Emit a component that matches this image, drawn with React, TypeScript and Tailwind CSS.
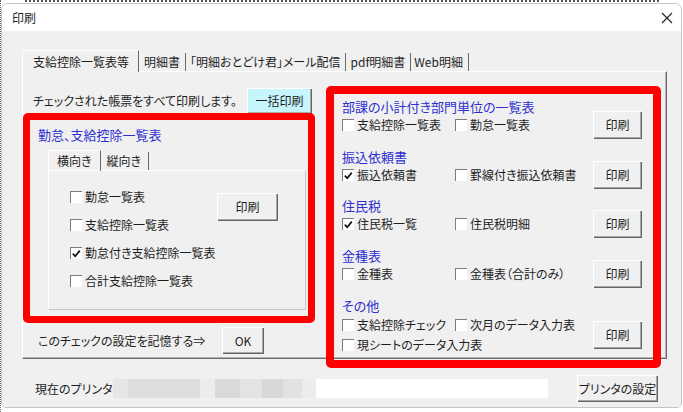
import React from "react";

function Check({ checked }: { checked?: boolean }) {
  return (
    <span className="relative inline-block w-[12px] h-[12px] shrink-0 bg-white border-t border-l border-[#7c7c7c]">
      {checked && (
        <svg className="absolute left-[0px] top-[0px]" width="11" height="11" viewBox="0 0 11 11">
          <path d="M1.8 5.6 L4.2 8.2 L8.8 2.6" stroke="#111" strokeWidth="1.7" fill="none" />
        </svg>
      )}
    </span>
  );
}

function Btn({ children, className, cyan }: { children: React.ReactNode; className: string; cyan?: boolean }) {
  return (
    <div
      className={
        "flex items-center justify-center shrink-0 text-[12px] text-[#1e1e1e] shadow-[inset_1px_1px_0_#ffffff,inset_-1px_-1px_0_#646464,inset_-2px_-2px_0_#a8a8a8] " +
        (cyan ? "bg-[#c6f5fc] " : "bg-[#f0f0f0] ") +
        className
      }
    >
      {children}
    </div>
  );
}

function Item({ checked, label, w }: { checked?: boolean; label: string; w?: string }) {
  return (
    <div className={"flex items-center gap-[3px] " + (w ?? "")}>
      <Check checked={checked} />
      <span className="text-[12px] leading-[16px] whitespace-nowrap">{label}</span>
    </div>
  );
}

export default function App() {
  return (
    <div className="w-[683px] h-[412px] bg-white overflow-hidden border-l border-dotted border-[#666] font-['Noto_Sans_CJK_JP',sans-serif] [font-feature-settings:'palt'] text-[#1e1e1e]">
      <div className="h-[2px] mx-[24px] border-t-2 border-dotted border-[#555]" />
      <div className="mt-[1px] w-[681px] h-[405px] rounded-t-[7px] rounded-b-[5px] border border-[#c4c4c4] flex flex-col overflow-hidden">
        {/* title bar */}
        <div className="h-[27px] bg-white flex items-center justify-between pl-[10px] pr-[8px] shrink-0">
          <span className="text-[12px] leading-[16px]">印刷</span>
          <svg width="12" height="12" viewBox="0 0 12 12">
            <path d="M1 1 L11 11 M11 1 L1 11" stroke="#222" strokeWidth="1.1" />
          </svg>
        </div>
        {/* body */}
        <div className="flex-1 bg-[#f0f0f0] flex flex-col pl-[20px] pr-[14px] pt-[19px]">
          {/* tabs */}
          <div className="flex items-end h-[21px] text-[12px]">
            <div className="h-[22px] -mb-[1px] relative z-10 bg-[#f0f0f0] border-l border-t border-white border-r border-r-[#6a6a6a] pl-[10px] pr-[9px] flex items-center">
              支給控除一覧表等
            </div>
            <div className="h-[18px] border-r border-[#6a6a6a] pl-[5px] pr-[5px] flex items-center">明細書</div>
            <div className="h-[18px] border-r border-[#6a6a6a] pl-[4px] pr-[4px] flex items-center">「明細おとどけ君」メール配信</div>
            <div className="h-[18px] border-r border-[#6a6a6a] pl-[5px] pr-[5px] flex items-center">pdf明細書</div>
            <div className="h-[18px] border-r border-[#6a6a6a] pl-[3px] pr-[5px] flex items-center">Web明細</div>
          </div>
          {/* panel */}
          <div className="h-[288px] flex border-t border-l border-white border-r border-b border-r-[#6a6a6a] border-b-[#6a6a6a] shadow-[inset_-1px_-1px_0_#b4b4b4]">
            {/* left column */}
            <div className="w-[292px] flex flex-col">
              <div className="mt-[16px] h-[26px] flex items-center pl-[10px] pr-[3px]">
                <span className="text-[12px] whitespace-nowrap">チェックされた帳票をすべて印刷します。</span>
                <Btn cyan className="ml-auto w-[65px] h-[26px]">一括印刷</Btn>
              </div>
              <div className="-mt-[1px] h-[210px] border-[7px] border-[#fe0000] rounded-[5px] relative z-10 flex flex-col">
                <div className="pl-[8px] pt-[7px] text-[13px] leading-[16px] text-[#2f2fd0]">勤怠、支給控除一覧表</div>
                <div className="ml-[18px] mt-[7px] flex items-end h-[20px] text-[12px]">
                  <div className="h-[21px] -mb-[1px] relative z-10 border-l border-t border-white border-r border-r-[#6a6a6a] pl-[8px] pr-[8px] flex items-center">横向き</div>
                  <div className="h-[18px] border-r border-[#6a6a6a] pl-[6px] pr-[7px] flex items-center">縦向き</div>
                </div>
                <div className="ml-[18px] mr-[2px] h-[140px] border-t border-l border-white border-b border-r border-b-[#c6c6c6] border-r-[#c6c6c6] flex pl-[21px] pt-[12px]">
                  <div className="w-[147px] flex flex-col">
                    <div className="h-[28px] flex items-center"><Item label="勤怠一覧表" /></div>
                    <div className="h-[28px] flex items-center"><Item label="支給控除一覧表" /></div>
                    <div className="h-[28px] flex items-center"><Item checked label="勤怠付き支給控除一覧表" /></div>
                    <div className="h-[28px] flex items-center"><Item label="合計支給控除一覧表" /></div>
                  </div>
                  <Btn className="mt-[10px] w-[61px] h-[28px]">印刷</Btn>
                </div>
              </div>
              <div className="mt-[4px] h-[27px] flex items-center pl-[15px]">
                <span className="text-[12px] w-[184px] whitespace-nowrap">このチェックの設定を記憶する⇒</span>
                <Btn className="w-[42px] h-[27px]">OK</Btn>
              </div>
            </div>
            {/* right red box */}
            <div className="ml-[11px] mt-[14px] w-[335px] h-[282px] border-[8px] border-[#fe0000] rounded-[5px] relative z-10 flex flex-col pl-[8px] pr-[11px] pt-[5px] text-[12px]">
              <div>
                <div className="text-[13px] leading-[16px] text-[#2f2fd0]">部課の小計付き部門単位の一覧表</div>
                <div className="-mt-[4px] flex items-center">
                  <div className="flex-1 flex items-center">
                    <Item w="w-[113px]" label="支給控除一覧表" />
                    <Item label="勤怠一覧表" />
                  </div>
                  <Btn className="w-[49px] h-[28px]">印刷</Btn>
                </div>
              </div>
              <div className="mt-[10px]">
                <div className="text-[13px] leading-[16px] text-[#2f2fd0]">振込依頼書</div>
                <div className="-mt-[4px] flex items-center">
                  <div className="flex-1 flex items-center">
                    <Item w="w-[113px]" checked label="振込依頼書" />
                    <Item label="罫線付き振込依頼書" />
                  </div>
                  <Btn className="w-[49px] h-[28px]">印刷</Btn>
                </div>
              </div>
              <div className="mt-[9px]">
                <div className="text-[13px] leading-[16px] text-[#2f2fd0]">住民税</div>
                <div className="-mt-[4px] flex items-center">
                  <div className="flex-1 flex items-center">
                    <Item w="w-[113px]" checked label="住民税一覧" />
                    <Item label="住民税明細" />
                  </div>
                  <Btn className="w-[49px] h-[28px]">印刷</Btn>
                </div>
              </div>
              <div className="mt-[10px]">
                <div className="text-[13px] leading-[16px] text-[#2f2fd0]">金種表</div>
                <div className="-mt-[4px] flex items-center">
                  <div className="flex-1 flex items-center">
                    <Item w="w-[113px]" label="金種表" />
                    <Item label="金種表（合計のみ）" />
                  </div>
                  <Btn className="w-[49px] h-[28px]">印刷</Btn>
                </div>
              </div>
              <div className="mt-[10px]">
                <div className="text-[13px] leading-[16px] text-[#2f2fd0]">その他</div>
                <div className="mt-[1px] flex items-center">
                  <div className="flex-1 flex flex-col">
                    <div className="h-[20px] flex items-center">
                      <Item w="w-[113px]" label="支給控除チェック" />
                      <Item label="次月のデータ入力表" />
                    </div>
                    <div className="h-[20px] flex items-center">
                      <Item label="現シートのデータ入力表" />
                    </div>
                  </div>
                  <Btn className="w-[49px] h-[28px]">印刷</Btn>
                </div>
              </div>
            </div>
          </div>
          {/* printer row */}
          <div className="mt-[16px] h-[27px] flex items-center pl-[13px] pr-[9px]">
            <span className="text-[12px] w-[78px] whitespace-nowrap">現在のプリンタ</span>
            <div className="flex h-[19px]">
              <div className="w-[15px] bg-[#e6e6e6]" />
              <div className="w-[72px] bg-[#dedede]" />
              <div className="w-[15px] bg-[#ececec]" />
              <div className="w-[25px] bg-[#d9d9d9]" />
              <div className="w-[22px] bg-[#e3e3e3]" />
              <div className="w-[21px] bg-[#d8d8d8]" />
              <div className="w-[19px] bg-[#e2e2e2]" />
              <div className="w-[14px] bg-[#ececec]" />
              <div className="w-[232px] bg-white" />
            </div>
            <Btn className="ml-auto w-[81px] h-[27px]">プリンタの設定</Btn>
          </div>
        </div>
      </div>
    </div>
  );
}
